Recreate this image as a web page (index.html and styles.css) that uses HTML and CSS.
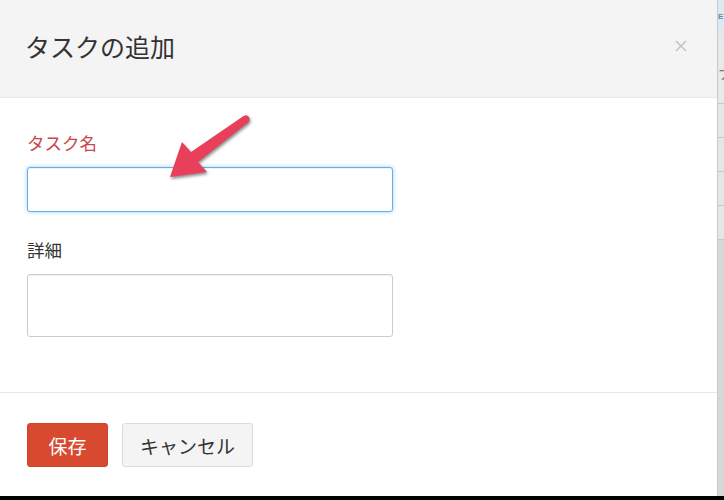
FILE: index.html
```html
<!DOCTYPE html>
<html lang="ja">
<head>
<meta charset="utf-8">
<title>タスクの追加</title>
<link rel="stylesheet" href="styles.css">
</head>
<body>
<div class="screen">
  <div class="modal">
    <div class="modal-header">
      <h4 class="modal-title">タスクの追加</h4>
      <button class="close" aria-label="閉じる">
        <svg width="12" height="12" viewBox="0 0 12 12"><path d="M1 1L11 11M11 1L1 11" stroke="#c4c4c4" stroke-width="1.6" fill="none"/></svg>
      </button>
    </div>
    <div class="modal-body">
      <label class="field-label required">タスク名</label>
      <input class="field field-focus" type="text">
      <label class="field-label">詳細</label>
      <textarea class="field field-tall"></textarea>
    </div>
    <div class="modal-footer">
      <button class="btn btn-save">保存</button>
      <button class="btn btn-cancel">キャンセル</button>
    </div>
    <svg class="arrow" width="100" height="80" viewBox="160 110 100 80">
      <path d="M170 177 L182 142 L191 152 L243.5 116 Q248 114 249.5 118 Q250 121 248 122.5 L198 162 L207 172 Z" fill="#e8405a"/>
    </svg>
  </div>
  <div class="strip">
    <div class="strip-top">E</div>
    <div class="strip-row strip-glyph">ナ</div>
    <div class="strip-row"></div>
    <div class="strip-row"></div>
    <div class="strip-row"></div>
    <div class="strip-row"></div>
  </div>
</div>
<div class="bottom-bar"></div>
</body>
</html>
```

FILE: styles.css
```css
* { box-sizing: border-box; }

html, body {
  margin: 0;
  padding: 0;
  background: #000;
}

body {
  width: 724px;
  height: 500px;
  overflow: hidden;
  font-family: "Noto Sans CJK JP", "Noto Sans", sans-serif;
  color: #333;
}

.screen {
  display: flex;
  height: 496px;
}

.modal {
  position: relative;
  width: 717px;
  background: #fff;
  display: flex;
  flex-direction: column;
}

.modal-header {
  height: 98px;
  background: #f4f4f4;
  border-bottom: 1px solid #e9e9e9;
  display: flex;
  align-items: center;
  justify-content: space-between;
  padding: 0 30px 6px 25px;
}

.modal-title {
  margin: 0;
  font-size: 25px;
  font-weight: normal;
  line-height: 30px;
  color: #333;
}

.close {
  border: 0;
  background: none;
  padding: 0;
  width: 12px;
  height: 12px;
  display: flex;
}

.modal-body {
  padding: 33px 0 55px 27px;
  display: flex;
  flex-direction: column;
  align-items: flex-start;
  border-bottom: 1px solid #e9e9e9;
}

.field-label {
  font-size: 17.5px;
  line-height: 24px;
  margin-bottom: 12px;
  color: #333;
}

.field-label.required {
  color: #c9474a;
}

.field {
  width: 366px;
  height: 45px;
  border: 1px solid #ccc;
  border-radius: 3px;
  background: #fff;
  margin: 0;
  padding: 6px 10px;
  font: inherit;
  resize: none;
  box-shadow: inset 0 1px 1px rgba(0,0,0,0.06);
}

.field-focus {
  border-color: #66afe9;
  box-shadow: inset 0 1px 1px rgba(0,0,0,0.06), 0 0 4px rgba(102,175,233,0.6);
  margin-bottom: 26px;
}

.field-tall {
  height: 63px;
}

.modal-footer {
  flex: 1;
  padding: 30px 0 0 27px;
  display: flex;
  align-items: flex-start;
  gap: 14px;
}

.btn {
  height: 44px;
  border-radius: 3px;
  font-family: inherit;
  font-size: 19px;
  line-height: 1;
  padding: 0;
  cursor: pointer;
}

.btn-save {
  width: 81px;
  background: #d74a2f;
  border: 1px solid #cf4329;
  color: #fff;
}

.btn-cancel {
  width: 131px;
  background: #f4f4f4;
  border: 1px solid #dcdcdc;
  color: #333;
}

.arrow {
  position: absolute;
  left: 160px;
  top: 110px;
  filter: drop-shadow(1px 2px 1.5px rgba(0,0,0,0.45));
}

.strip {
  width: 7px;
  background: #d8d8d8;
  border-left: 1px solid #c9c9c9;
  display: flex;
  flex-direction: column;
  overflow: hidden;
}

.strip-top {
  height: 34px;
  padding-top: 12px;
  background: #dfe8ec;
  color: #4f8fc6;
  font-family: "Liberation Sans", sans-serif;
  font-size: 8px;
  line-height: 10px;
  font-weight: bold;
}

.strip-row {
  height: 34px;
  border-bottom: 1px solid #c8c8c8;
  background: #e6e6e6;
}

.strip-glyph {
  height: 70px;
  padding-top: 30px;
  font-size: 16px;
  line-height: 16px;
  color: #777;
  background: #e9e9e9;
}

.bottom-bar {
  height: 4px;
  background: #000;
}
```
